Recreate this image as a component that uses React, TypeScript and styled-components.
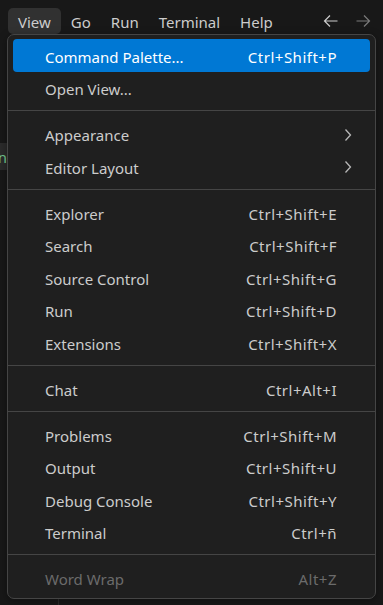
import React from 'react';
import styled, { createGlobalStyle } from 'styled-components';

const GlobalStyle = createGlobalStyle`
  html, body {
    margin: 0;
    padding: 0;
    background: #181818;
    font-family: "Noto Sans", "Open Sans", sans-serif;
    -webkit-font-smoothing: antialiased;
  }
`;

const Window = styled.div`
  position: relative;
  width: 383px;
  height: 605px;
  overflow: hidden;
  background: #181818;
  color: #cccccc;
`;

const TitleBar = styled.div`
  display: flex;
  align-items: flex-start;
  height: 35px;
  padding: 8px 0 0 8px;
  box-sizing: border-box;
`;

const MenuBarItem = styled.div<{ $active?: boolean }>`
  height: 26px;
  padding: 1px 10px 0;
  box-sizing: border-box;
  display: flex;
  align-items: center;
  font-size: 15px;
  border-radius: 5px;
  color: #cccccc;
  background: ${(p) => (p.$active ? '#313131' : 'transparent')};
`;

const NavArrows = styled.div`
  display: flex;
  gap: 16px;
  margin-left: auto;
  margin-right: 12px;
  height: 26px;
  align-items: center;
`;

const Body = styled.div`
  display: flex;
  height: 570px;
`;

const SideStrip = styled.div`
  width: 59px;
  border-right: 1px solid #2b2b2b;
  padding-top: 108px;
  box-sizing: border-box;
`;

const Peek = styled.div`
  width: 7px;
  height: 27px;
  overflow: hidden;
  background: #2b2b2b;
  display: flex;
  align-items: center;
  justify-content: flex-end;
  font-size: 15px;
  color: #73c991;
  white-space: nowrap;
`;

const MenuPanel = styled.div`
  position: absolute;
  left: 7px;
  top: 34px;
  width: 369px;
  box-sizing: border-box;
  background: #1f1f1f;
  border: 1px solid #454545;
  border-radius: 7px;
  padding: 4px 5px;
  box-shadow: 0 2px 8px rgba(0, 0, 0, 0.36);
`;

const Row = styled.div<{ $selected?: boolean; $disabled?: boolean }>`
  display: flex;
  align-items: center;
  height: 32.5px;
  box-sizing: border-box;
  padding: 3px 33px 0 32px;
  border-radius: 4px;
  font-size: 15px;
  background: ${(p) => (p.$selected ? '#0078d4' : 'transparent')};
  color: ${(p) => (p.$selected ? '#ffffff' : p.$disabled ? '#6b6b6b' : '#cccccc')};
`;

const Label = styled.span`
  flex: 1;
`;

const Keys = styled.span`
  white-space: nowrap;
  letter-spacing: 0.5px;
`;

const Separator = styled.div`
  height: 1px;
  background: #454545;
  margin: 6px -5px 6.5px;
`;

const Chevron = styled.svg`
  margin-right: -19px;
  margin-top: -1px;
`;

const ArrowLeft = ({ color }: { color: string }) => (
  <svg width="16" height="16" viewBox="0 0 16 16" fill="none">
    <path d="M1.5 8h13M7 2.5 1.5 8 7 13.5" stroke={color} strokeWidth="1.2" />
  </svg>
);

const ArrowRight = ({ color }: { color: string }) => (
  <svg width="16" height="16" viewBox="0 0 16 16" fill="none">
    <path d="M14.5 8h-13M9 2.5 14.5 8 9 13.5" stroke={color} strokeWidth="1.2" />
  </svg>
);

type Item =
  | { sep: true }
  | { label: string; keys?: string; sub?: boolean; selected?: boolean; disabled?: boolean };

const items: Item[] = [
  { label: 'Command Palette...', keys: 'Ctrl+Shift+P', selected: true },
  { label: 'Open View...' },
  { sep: true },
  { label: 'Appearance', sub: true },
  { label: 'Editor Layout', sub: true },
  { sep: true },
  { label: 'Explorer', keys: 'Ctrl+Shift+E' },
  { label: 'Search', keys: 'Ctrl+Shift+F' },
  { label: 'Source Control', keys: 'Ctrl+Shift+G' },
  { label: 'Run', keys: 'Ctrl+Shift+D' },
  { label: 'Extensions', keys: 'Ctrl+Shift+X' },
  { sep: true },
  { label: 'Chat', keys: 'Ctrl+Alt+I' },
  { sep: true },
  { label: 'Problems', keys: 'Ctrl+Shift+M' },
  { label: 'Output', keys: 'Ctrl+Shift+U' },
  { label: 'Debug Console', keys: 'Ctrl+Shift+Y' },
  { label: 'Terminal', keys: 'Ctrl+ñ' },
  { sep: true },
  { label: 'Word Wrap', keys: 'Alt+Z', disabled: true },
];

const App = () => {
  return (
    <Window>
      <GlobalStyle />
      <TitleBar>
        <MenuBarItem $active>View</MenuBarItem>
        <MenuBarItem>Go</MenuBarItem>
        <MenuBarItem>Run</MenuBarItem>
        <MenuBarItem>Terminal</MenuBarItem>
        <MenuBarItem>Help</MenuBarItem>
        <NavArrows>
          <ArrowLeft color="#cccccc" />
          <ArrowRight color="#7a7a7a" />
        </NavArrows>
      </TitleBar>
      <Body>
        <SideStrip>
          <Peek>n</Peek>
        </SideStrip>
      </Body>
      <MenuPanel>
        {items.map((it, i) =>
          'sep' in it ? (
            <Separator key={i} />
          ) : (
            <Row key={i} $selected={it.selected} $disabled={it.disabled}>
              <Label>{it.label}</Label>
              {it.keys && <Keys>{it.keys}</Keys>}
              {it.sub && (
                <Chevron width="16" height="16" viewBox="0 0 16 16" fill="none">
                  <path d="M5.5 2.5 10.5 8l-5 5.5" stroke="#b8b8b8" strokeWidth="1.3" />
                </Chevron>
              )}
            </Row>
          )
        )}
      </MenuPanel>
    </Window>
  );
};

export default App;
